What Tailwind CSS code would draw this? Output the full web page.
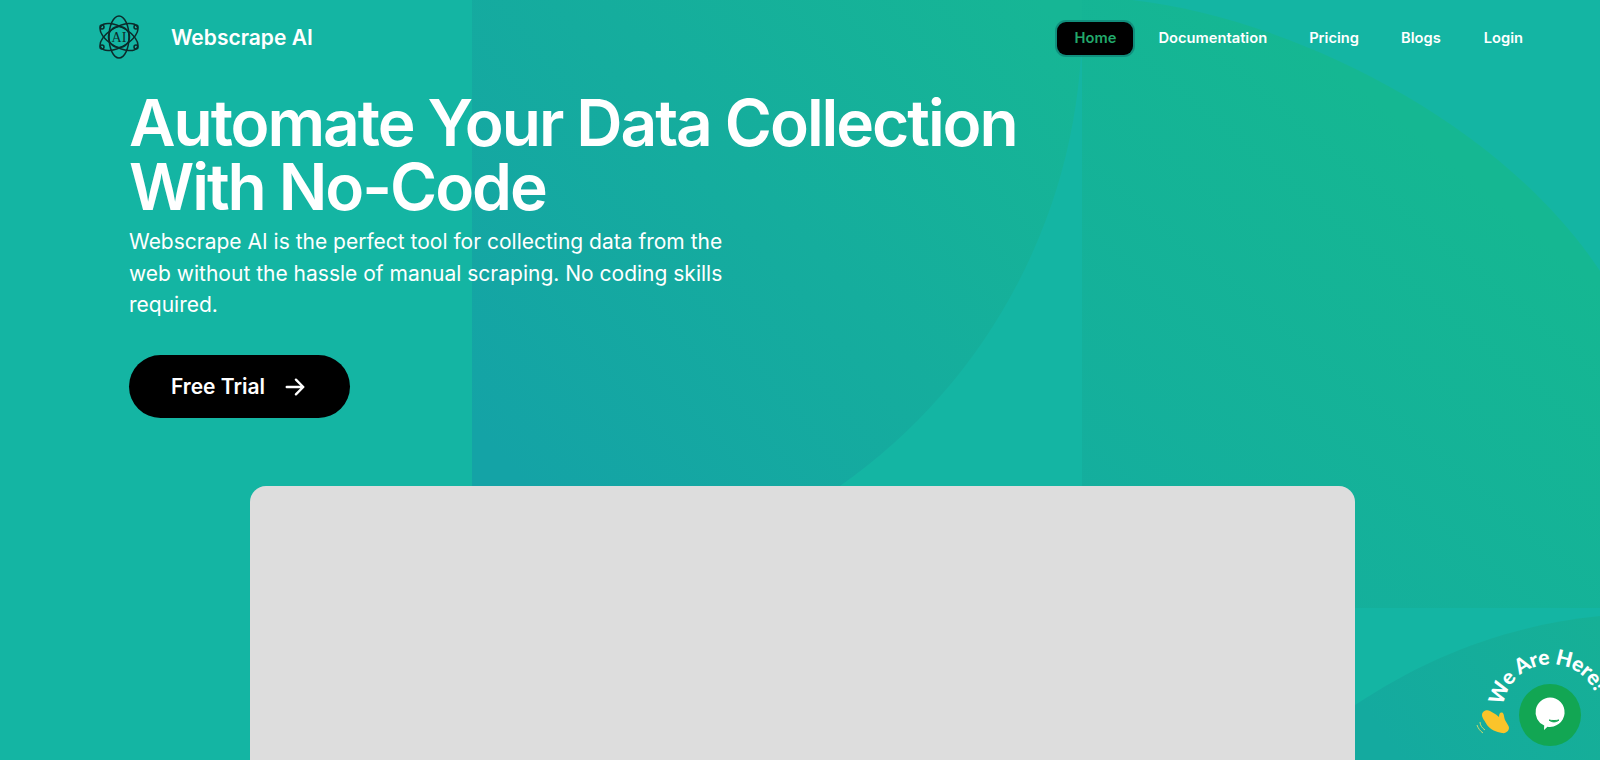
<!DOCTYPE html>
<html lang="en">
<head>
    <meta charset="UTF-8">
    <title>Webscrape AI</title>
    <script src="https://cdn.jsdelivr.net/npm/@tailwindcss/browser@4"></script>
</head>
<body class="h-[760px] overflow-hidden bg-[#14b5a3] font-['Inter',sans-serif] text-white">
    <div class="relative h-[760px] overflow-hidden">
        <!-- Background shapes -->
        <svg class="absolute inset-0" width="1600" height="760" viewBox="0 0 1600 760" fill="none">
            <defs>
                <linearGradient id="g1" gradientUnits="userSpaceOnUse" x1="520" y1="480" x2="1060" y2="20">
                    <stop offset="0" stop-color="#14a3a6"/>
                    <stop offset="1" stop-color="#16b695"/>
                </linearGradient>
                <linearGradient id="g2" gradientUnits="userSpaceOnUse" x1="1150" y1="620" x2="1500" y2="200">
                    <stop offset="0" stop-color="#14ad9f"/>
                    <stop offset="1" stop-color="#15b792"/>
                </linearGradient>
                <linearGradient id="g3" gradientUnits="userSpaceOnUse" x1="1600" y1="620" x2="1400" y2="760">
                    <stop offset="0" stop-color="#16b096"/>
                    <stop offset="1" stop-color="#14aa9f"/>
                </linearGradient>
            </defs>
            <path d="M472 0H1082V20A568 568 0 0 1 840 486H472Z" fill="url(#g1)"/>
            <path d="M1082 0H1132C1290 18 1500 120 1600 271V608H1082Z" fill="url(#g2)"/>
            <path d="M1355 705C1430 655 1510 625 1600 616V760H1355Z" fill="url(#g3)"/>
        </svg>

        <!-- Nav -->
        <header class="relative flex h-[74px] items-center justify-between pl-[98px] pr-[77px]">
            <div class="flex items-center gap-[31px]">
                <svg width="42" height="44" viewBox="0 0 42 44" fill="none" stroke="#0c2b2b" stroke-width="1.5">
                    <ellipse cx="21" cy="22" rx="10" ry="21"/>
                    <ellipse cx="21" cy="22" rx="10" ry="21" transform="rotate(60 21 22)"/>
                    <ellipse cx="21" cy="22" rx="10" ry="21" transform="rotate(-60 21 22)"/>
                    <circle cx="21" cy="22" r="10.500"/>
                    <circle cx="4" cy="12" r="2"/>
                    <circle cx="38" cy="12" r="2"/>
                    <circle cx="4" cy="32" r="2"/>
                    <circle cx="38" cy="32" r="2"/>
                    <text x="21" y="27" text-anchor="middle" font-family="Liberation Serif" font-size="14" fill="#0c2b2b" stroke="none">AI</text>
                </svg>
                <span class="mt-[2px] text-[21px] font-semibold">Webscrape AI</span>
            </div>
            <nav class="mt-[2px] flex items-center text-[14.7px] font-semibold">
                <a class="flex h-[33px] w-[76px] items-center justify-center rounded-[9px] bg-black text-[#22a86b] shadow-[0_0_0_2px_rgba(15,118,110,0.6)]">Home</a>
                <a class="ml-[25px]">Documentation</a>
                <a class="ml-[42px]">Pricing</a>
                <a class="ml-[42px]">Blogs</a>
                <a class="ml-[43px]">Login</a>
            </nav>
        </header>

        <!-- Hero -->
        <section class="relative pl-[129px]">
            <h1 class="mt-[17px] text-[64px] leading-[64px] font-semibold tracking-[-0.032em]">Automate Your Data Collection<br>With No-Code</h1>
            <p class="mt-[7px] w-[610px] text-[21px] leading-[31.5px]">Webscrape AI is the perfect tool for collecting data from the web without the hassle of manual scraping. No coding skills required.</p>
            <a class="mt-[34px] flex h-[63px] w-[221px] items-center justify-center gap-[19px] rounded-full bg-black pt-[1px] pr-[2px] text-[21px] font-semibold">
                Free Trial
                <svg width="22" height="22" viewBox="0 0 24 24" fill="none" stroke="white" stroke-width="2.6" stroke-linecap="round" stroke-linejoin="round"><path d="M3 12h18M13 4l8 8-8 8"/></svg>
            </a>
        </section>

        <!-- Video placeholder -->
        <div class="absolute left-[250px] top-[486px] h-[300px] w-[1105px] rounded-[16px] bg-[#dddddd]"></div>

        <!-- Chat widget -->
        <svg class="absolute right-0 bottom-0" width="150" height="130" viewBox="0 0 150 130" fill="none">
            <defs><path id="arc" d="M53 76A48.500 48.500 0 0 1 149.500 81"/></defs>
            <text font-family="Lato" font-weight="900" font-size="21" fill="white" textLength="124" lengthAdjust="spacing"><textPath href="#arc">We Are Here!</textPath></text>
            <circle cx="100" cy="85" r="31" fill="#12a653"/>
            <path d="M100 67.500a14.700 14.700 0 1 1-2.500 29.200l-3.500 3.300.2-4.400A14.700 14.700 0 0 1 100 67.500Z" fill="white"/>
            <path d="M99 90c3 2.500 7 2.500 10 0-3 .7-7 .7-10 0Z" fill="#12a653" stroke="#12a653"/>
            <!-- waving hand -->
            <path d="M32 85C32 81 37 79 40 81L46 84.500 49 87C49 84 50 82 52 82.500 54 83 54 87 55 90L58.500 96C60.500 100 56 104 52 103 46 102 41 100 37 95 35 91 32 88 32 85Z" fill="#fbc42a"/>
            <path d="M30 92c0 3 2 6 5 8M27 95c1 3 3 6 6 8" stroke="#cfd96a" stroke-width="1"/>
        </svg>
    </div>
</body>
</html>
